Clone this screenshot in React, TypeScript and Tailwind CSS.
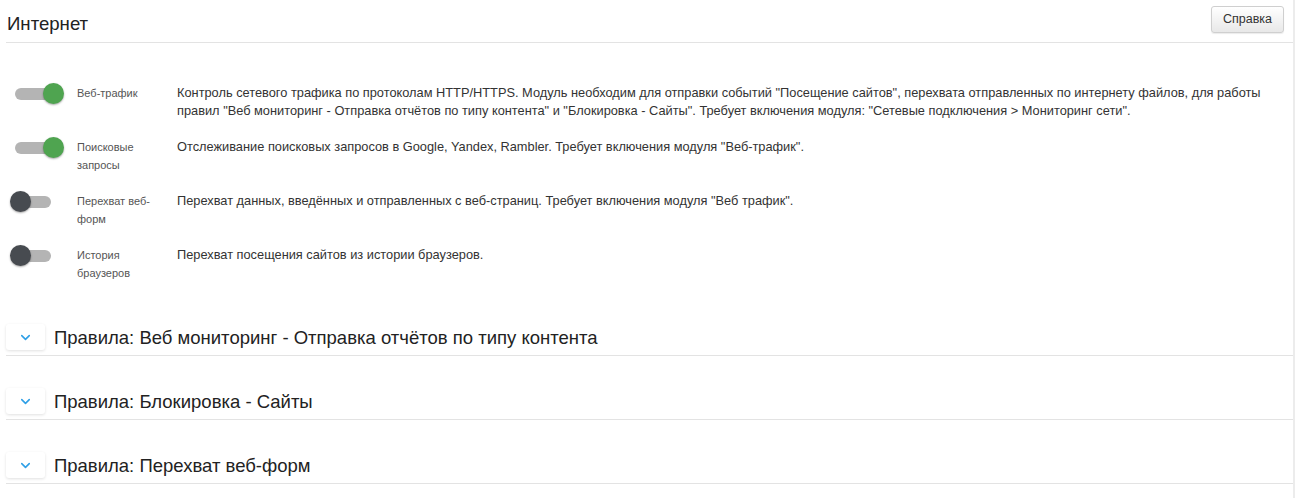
import { ChevronDown } from "lucide-react";

interface Module {
  label: string;
  text: string;
  on: boolean;
}

const modules: Module[] = [
  {
    label: "Веб-трафик",
    text: 'Контроль сетевого трафика по протоколам HTTP/HTTPS. Модуль необходим для отправки событий "Посещение сайтов", перехвата отправленных по интернету файлов, для работы правил "Веб мониторинг - Отправка отчётов по типу контента" и "Блокировка - Сайты". Требует включения модуля: "Сетевые подключения > Мониторинг сети".',
    on: true,
  },
  {
    label: "Поисковые запросы",
    text: 'Отслеживание поисковых запросов в Google, Yandex, Rambler. Требует включения модуля "Веб-трафик".',
    on: true,
  },
  {
    label: "Перехват веб-форм",
    text: 'Перехват данных, введённых и отправленных с веб-страниц. Требует включения модуля "Веб трафик".',
    on: false,
  },
  {
    label: "История браузеров",
    text: "Перехват посещения сайтов из истории браузеров.",
    on: false,
  },
];

const sections = [
  "Правила: Веб мониторинг - Отправка отчётов по типу контента",
  "Правила: Блокировка - Сайты",
  "Правила: Перехват веб-форм",
];

function Toggle({ on }: { on: boolean }) {
  return (
    <div className="relative w-[54px] h-[18px] shrink-0">
      <div className="absolute left-[5px] top-[3px] w-[36px] h-[12px] rounded-full bg-[#b4b4b4]" />
      {on ? (
        <div className="absolute left-[33px] top-[-2px] w-[21px] h-[21px] rounded-full bg-[#4fa450] shadow-[0_1px_2px_rgba(0,0,0,0.35)]" />
      ) : (
        <div className="absolute left-0 top-[-2px] w-[21px] h-[21px] rounded-full bg-[#474b50] shadow-[0_1px_2px_rgba(0,0,0,0.35)]" />
      )}
    </div>
  );
}

export default function App() {
  return (
    <div
      className="w-[1295px] h-[498px] bg-white border-r-2 border-[#ececec] overflow-hidden"
      style={{ fontFamily: '"Liberation Sans", Arial, sans-serif' }}
    >
      <div className="ml-[6px] h-[43px] flex items-start justify-between border-b border-[#e3e3e3]">
        <h1 className="mt-[15px] text-[18.6px] leading-none text-[#222] pl-[1px]">Интернет</h1>
        <button className="mt-[6px] mr-[9px] h-[27px] px-[11px] text-[12.5px] text-[#333] rounded-[3px] border border-[#cfcfcf] bg-gradient-to-b from-white to-[#e8e8e8] shadow-[0_1px_1px_rgba(0,0,0,0.08)]">
          Справка
        </button>
      </div>

      <div className="pt-[41px] flex flex-col gap-[18px]">
        {modules.map((m) => (
          <div key={m.label} className="flex items-start">
            <div className="ml-[10px] pt-[1px]">
              <Toggle on={m.on} />
            </div>
            <div className="ml-[13px] w-[100px] pr-[8px] text-[11px] leading-[18px] text-[#555] shrink-0">
              {m.label}
            </div>
            <div className="flex-1 pr-[12px] text-[12.8px] leading-[18px] text-[#333]">{m.text}</div>
          </div>
        ))}
      </div>

      <div className="pt-[42px] flex flex-col gap-[32px]">
        {sections.map((s) => (
          <div key={s} className="ml-[6px] pb-[5px] flex items-center border-b border-[#e3e3e3]">
            <div className="w-[39px] h-[26px] rounded-[3px] bg-white shadow-[0_1px_3px_rgba(0,0,0,0.12)] flex items-center justify-center">
              <ChevronDown className="w-[15px] h-[15px] text-[#2e9fe6]" strokeWidth={2.5} />
            </div>
            <div className="ml-[9px] pt-[2px] text-[18.5px] leading-none text-[#222]">{s}</div>
          </div>
        ))}
      </div>
    </div>
  );
}
